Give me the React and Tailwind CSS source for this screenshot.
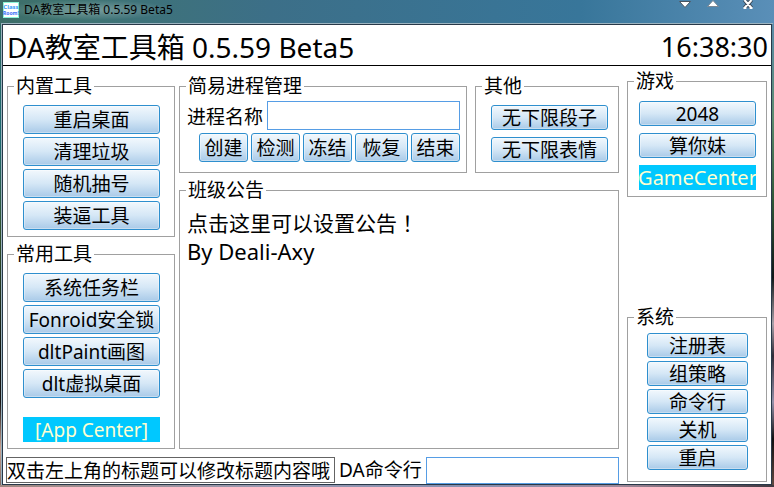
import { useState } from 'react'

function Group({ title, className = '', bodyClass = '', children }) {
  return (
    <fieldset className={`flex min-w-0 flex-col border border-[#a0a0a0] ${className}`}>
      <legend className="ml-1.5 h-6 px-0.5 leading-6">{title}</legend>
      <div className={bodyClass}>{children}</div>
    </fieldset>
  )
}

function Button({ children, className = 'h-[29px]' }) {
  return (
    <button
      type="button"
      className={`flex items-center justify-center whitespace-nowrap rounded-[3px] border border-[#2e8fce] bg-linear-to-b from-[#f2f8fd] via-[#d5e7f6] via-50% to-[#a9cae8] pt-0.5 shadow-[inset_0_0_0_1px_rgba(255,255,255,0.35)] ${className}`}
    >
      {children}
    </button>
  )
}

function CenterLink({ children, className = '' }) {
  return (
    <a
      href="#"
      className={`flex h-[25px] items-center justify-center whitespace-nowrap bg-[#00c8ff] text-[#ffffd0] ${className}`}
    >
      {children}
    </a>
  )
}

function TitleBar() {
  return (
    <header className="flex h-6 items-start justify-between px-[3px]">
      <div className="flex h-5 items-center gap-[5px] bg-[radial-gradient(ellipse_at_center,rgba(255,255,255,0.3),rgba(255,255,255,0)_72%)]">
        <svg width="16" height="16" viewBox="0 0 16 16" aria-hidden="true">
          <rect width="16" height="16" fill="#fff" />
          <rect x="0.5" y="0.5" width="15" height="15" fill="none" stroke="#8cf4d8" />
          <text x="8" y="7" textAnchor="middle" fontSize="6" fontWeight="bold" fill="#3b9cf8">Class</text>
          <text x="8" y="13" textAnchor="middle" fontSize="5" fontWeight="bold" fill="#3b6cf8">Room!</text>
        </svg>
        <h1 className="whitespace-nowrap text-xs">DA教室工具箱 0.5.59 Beta5</h1>
      </div>
      <div className="flex items-start gap-4 pr-[17px]">
        <button type="button" aria-label="最小化">
          <svg width="12" height="9" viewBox="0 0 12 9"><path d="M0.500 1.500h11L6 7.500z" fill="#fff" stroke="#4a5560" strokeWidth="1" /></svg>
        </button>
        <button type="button" aria-label="最大化">
          <svg width="12" height="9" viewBox="0 0 12 9"><path d="M0.500 6.500h11L6 0.500z" fill="#fff" stroke="#7a8894" strokeWidth="1" /></svg>
        </button>
        <button type="button" aria-label="关闭" className="ml-2">
          <svg width="11" height="10" viewBox="0 0 11 10">
            <path d="M1.500 0l7 8M8.500 0l-7 8" stroke="#3d4a58" strokeWidth="4" />
            <path d="M1.500 0l7 8M8.500 0l-7 8M0.500 8h3M6.500 8h3" stroke="#fff" strokeWidth="2" />
          </svg>
        </button>
      </div>
    </header>
  )
}

const BUILT_IN = ['重启桌面', '清理垃圾', '随机抽号', '装逼工具']
const COMMON = ['系统任务栏', 'Fonroid安全锁', 'dltPaint画图', 'dlt虚拟桌面']
const SYSTEM = ['注册表', '组策略', '命令行', '关机', '重启']

function Workspace() {
  const [processName, setProcessName] = useState('')
  const [command, setCommand] = useState('')

  return (
    <main className="flex min-w-0 flex-1 flex-col border border-[#283848] bg-white ring-1 ring-[#9cb4c0]">
      <div className="flex h-[41px] items-center justify-between border-b border-black pt-1 pr-[3px] pl-1">
        <h2 className="text-[28px]">DA教室工具箱 0.5.59 Beta5</h2>
        <time className="text-[27px]">16:38:30</time>
      </div>
      <div className="flex flex-1 pr-1 pl-[3px]">
        <div className="flex min-w-0 flex-1 flex-col pt-2">
          <div className="flex flex-1 gap-1 pl-px">
            <div className="flex w-[168px] flex-col gap-[5px]">
              <Group title="内置工具" bodyClass="flex flex-col gap-[3px] pt-[7px] pr-3.5 pb-1.5 pl-[15px]">
                {BUILT_IN.map((t) => <Button key={t}>{t}</Button>)}
              </Group>
              <Group title="常用工具" className="flex-1" bodyClass="flex flex-col gap-[3px] pt-[7px] pr-3.5 pb-1.5 pl-[15px]">
                {COMMON.map((t) => <Button key={t}>{t}</Button>)}
                <CenterLink className="mt-4 pt-0.5">[App Center]</CenterLink>
              </Group>
            </div>
            <div className="flex min-w-0 flex-1 flex-col gap-[5px]">
              <div className="flex gap-2">
                <Group title="简易进程管理" className="flex-1" bodyClass="flex flex-col gap-[3px] pt-[3px] pr-1.5 pb-2.5 pl-[7px]">
                  <div className="flex h-[29px] items-center gap-1">
                    <label htmlFor="process" className="pt-1">进程名称</label>
                    <input
                      id="process"
                      value={processName}
                      onChange={(e) => setProcessName(e.target.value)}
                      className="h-[29px] min-w-0 flex-1 border border-[#569de5] px-1"
                    />
                  </div>
                  <div className="flex gap-[3px] pl-3">
                    <Button className="h-[29px] flex-1">创建</Button>
                    <Button className="h-[29px] flex-1">检测</Button>
                    <Button className="h-[29px] flex-1">冻结</Button>
                    <Button className="h-[29px] w-[53px]">恢复</Button>
                    <Button className="h-[29px] flex-1">结束</Button>
                  </div>
                </Group>
                <Group title="其他" className="w-[144px]" bodyClass="flex flex-col gap-[7px] pt-[7px] pr-2.5 pb-2.5 pl-[15px]">
                  <Button className="h-[25px]">无下限段子</Button>
                  <Button className="h-[25px]">无下限表情</Button>
                </Group>
              </div>
              <Group title="班级公告" className="flex-1" bodyClass="px-[7px] pt-1.5 leading-7">
                <p className="text-[21px]">
                  点击这里可以设置公告<span className="font-['Noto_Sans_CJK_TC',sans-serif]">！</span>
                </p>
                <p className="text-[22px]">By Deali-Axy</p>
              </Group>
            </div>
          </div>
          <div className="mt-2 flex gap-1">
            <p className="flex h-[26px] items-center whitespace-nowrap border border-[#646464] pt-0.5 pr-1">双击左上角的标题可以修改标题内容哦</p>
            <label htmlFor="command" className="flex h-[26px] items-center whitespace-nowrap">DA命令行</label>
            <input
              id="command"
              value={command}
              onChange={(e) => setCommand(e.target.value)}
              className="h-[27px] min-w-0 flex-1 border border-[#569de5] px-1"
            />
          </div>
        </div>
        <div className="ml-2 flex w-[140px] flex-col justify-between pt-[3px] pb-0.5">
          <Group title="游戏" bodyClass="flex flex-col gap-[7px] pt-2 pr-2.5 pb-1.5 pl-[11px]">
            <Button className="h-[25px]">2048</Button>
            <Button className="h-[25px]">算你妹</Button>
            <CenterLink className="text-xl">GameCenter</CenterLink>
          </Group>
          <Group title="系统" bodyClass="flex flex-col gap-[3px] pt-1 pr-[18px] pb-[11px] pl-[19px]">
            {SYSTEM.map((t) => <Button key={t} className="h-[25px]">{t}</Button>)}
          </Group>
        </div>
      </div>
    </main>
  )
}

export default function App() {
  return (
    <div className="flex min-h-screen flex-col bg-[linear-gradient(to_right,#3c6c68_0px,#3f7470_60px,#3c6f88_35%,#38769a_75%,#5a8fb8_100%)] font-['Noto_Sans','Noto_Sans_CJK_SC',sans-serif] text-[19px] text-black">
      <TitleBar />
      <div className="flex flex-1">
        <div className="w-0.5 bg-[linear-gradient(to_bottom,#2a6660,#1c6a70_25%,#30502c_45%,#101410_72%,#181414_82%,#c8a090_92%,#806860)]" />
        <Workspace />
        <div className="w-0.5 bg-[linear-gradient(to_bottom,#5a8ca8,#5c8c70_20%,#305838_38%,#101818_55%,#a8a0a8_65%,#302c38_72%,#9490a8_82%,#101010_90%,#604840)]" />
      </div>
      <div className="h-0.5 bg-[linear-gradient(to_right,#a08880,#9898b0_35%,#8890b0_60%,#a08898_80%,#403840)]" />
    </div>
  )
}
